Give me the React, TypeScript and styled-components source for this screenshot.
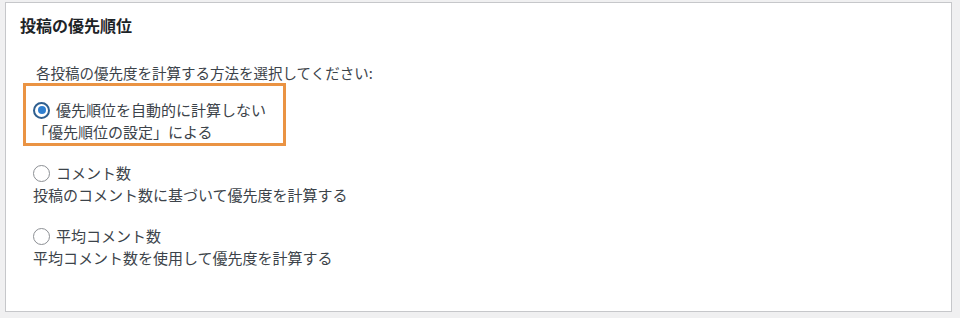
import React from 'react'
import styled, { createGlobalStyle } from 'styled-components'

const GlobalStyle = createGlobalStyle`
  html, body {
    margin: 0;
    padding: 0;
    background: #f0f0f1;
  }
  body {
    font-family: "Noto Sans CJK JP", "Noto Sans", sans-serif;
    color: #3c434a;
  }
`

const Page = styled.div`
  padding: 2px 8px 0 5px;
`

const Panel = styled.section`
  box-sizing: border-box;
  width: 947px;
  height: 310px;
  background: #fff;
  border: 1px solid #c6c7ca;
  padding: 12px 14px 0;
`

const Title = styled.h2`
  margin: 0;
  font-size: 16px;
  line-height: 20px;
  font-weight: 700;
  color: #1d2327;
`

const Settings = styled.div`
  margin: 27px 0 0 3px;
`

const Description = styled.p`
  margin: 0 0 0 13px;
  font-size: 14.5px;
  line-height: 21px;
`

const Option = styled.div<{ $highlight?: boolean }>`
  box-sizing: border-box;
  width: 263px;
  padding: 13px 0 0 7px;
  border: 3px solid ${p => (p.$highlight ? '#ea9343' : 'transparent')};
  font-size: 15px;
  line-height: 22px;
`

const Label = styled.label`
  display: flex;
  align-items: center;
  white-space: nowrap;
`

const Radio = styled.span<{ $checked?: boolean }>`
  box-sizing: border-box;
  flex: none;
  width: 17px;
  height: 17px;
  margin-right: 6px;
  border-radius: 50%;
  border: ${p => (p.$checked ? '2px solid #2f5f8f' : '1px solid #8c8f94')};
  display: flex;
  align-items: center;
  justify-content: center;

  &::after {
    content: '';
    display: ${p => (p.$checked ? 'block' : 'none')};
    width: 8px;
    height: 8px;
    border-radius: 50%;
    background: #2f7fd0;
  }
`

const Hint = styled.div`
  white-space: nowrap;
`

const options = [
  { label: '優先順位を自動的に計算しない', hint: '「優先順位の設定」による', checked: true },
  { label: 'コメント数', hint: '投稿のコメント数に基づいて優先度を計算する', checked: false },
  { label: '平均コメント数', hint: '平均コメント数を使用して優先度を計算する', checked: false },
]

export default function App() {
  return (
    <Page>
      <GlobalStyle />
      <Panel>
        <Title>投稿の優先順位</Title>
        <Settings>
          <Description>各投稿の優先度を計算する方法を選択してください:</Description>
          {options.map(o => (
            <Option key={o.label} $highlight={o.checked}>
              <Label>
                <Radio $checked={o.checked} />
                {o.label}
              </Label>
              <Hint>{o.hint}</Hint>
            </Option>
          ))}
        </Settings>
      </Panel>
    </Page>
  )
}
